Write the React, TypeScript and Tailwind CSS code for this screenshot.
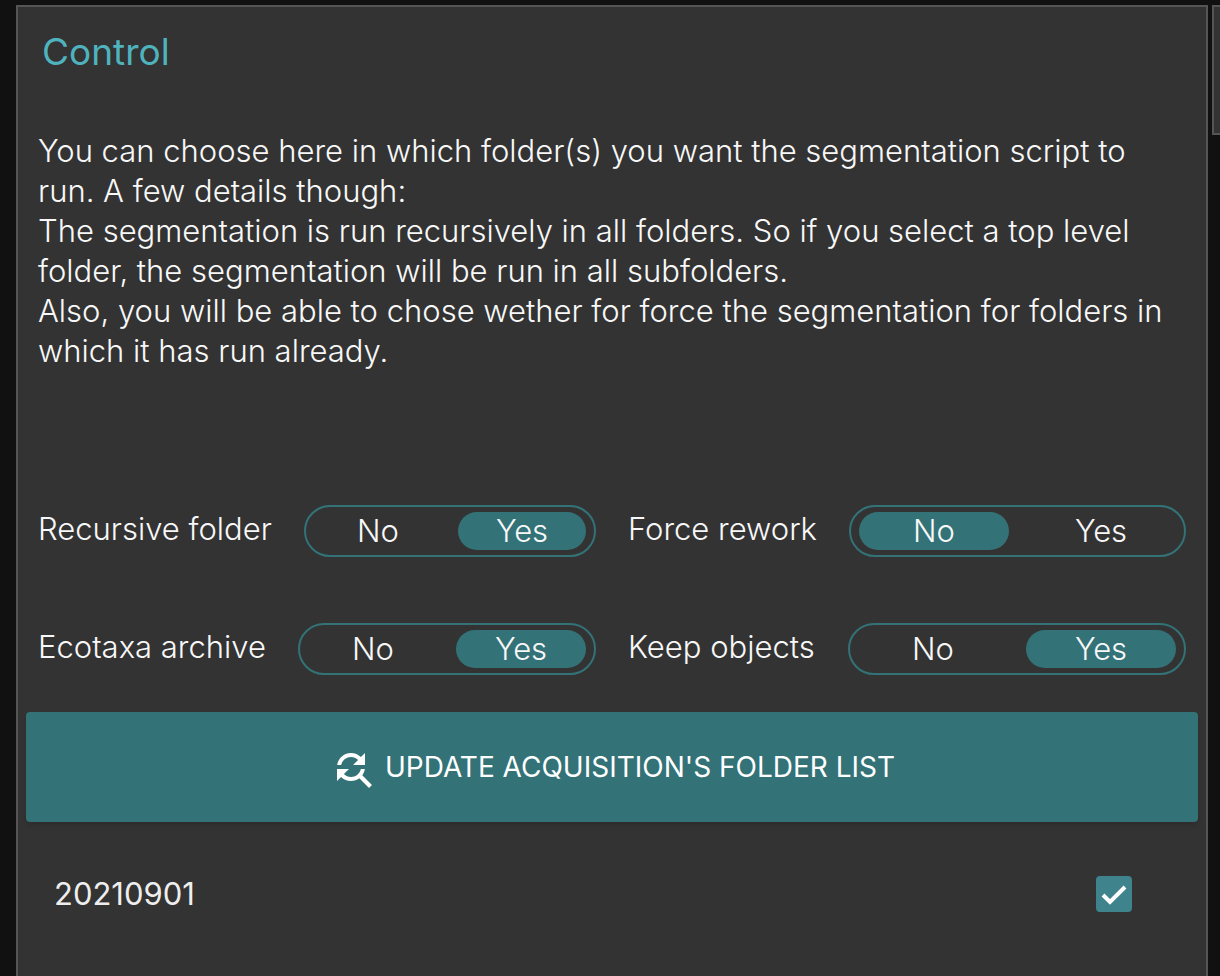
import React, { useId, useState } from "react";

type ToggleProps = { label: string; initial: "No" | "Yes"; className: string; pill: string };

function Toggle({ label, initial, className, pill }: ToggleProps) {
  const [value, setValue] = useState(initial);
  const id = useId();
  return (
    <div role="group" aria-labelledby={id} className="flex items-center justify-between">
      <span id={id} className="pb-1 whitespace-nowrap">{label}</span>
      <div className={`flex h-[52px] items-center justify-between rounded-full border-2 border-[#337277] px-2 ${className}`}>
        {(["No", "Yes"] as const).map((option) => (
          <button
            key={option}
            type="button"
            aria-pressed={value === option}
            onClick={() => setValue(option)}
            className={`flex h-[38px] items-center justify-center rounded-full ${pill} ${value === option ? "bg-[#337277]" : ""}`}
          >
            {option}
          </button>
        ))}
      </div>
    </div>
  );
}

export default function App() {
  const [checked, setChecked] = useState(true);
  return (
    <div className="flex min-h-screen items-stretch bg-[#111111] pt-[5px] pl-4 font-['Inter',sans-serif] text-[31px] leading-10 font-light text-[#f8f8f8]">
      <main className="min-w-0 flex-1 border-2 border-b-0 border-[#555555] bg-[#333333] px-2">
        <h1 className="px-4 pt-[23px] text-[37px] leading-11 font-normal text-[#4fb3bf]">Control</h1>
        <div className="px-3 pt-[57px]">
          <p>
            You can choose here in which folder(s) you want the segmentation script to run. A few details though:
            <br />
            The segmentation is run recursively in all folders. So if you select a top level folder, the segmentation will be run in all subfolders.
            <br />
            Also, you will be able to chose wether for force the segmentation for folders in which it has run already.
          </p>
        </div>
        <div className="grid grid-cols-2 gap-x-8 gap-y-[66px] pt-[134px] pr-3 pl-3">
          <Toggle label="Recursive folder" initial="Yes" className="w-[292px]" pill="w-32" />
          <Toggle label="Force rework" initial="No" className="w-[337px]" pill="w-[150px]" />
          <Toggle label="Ecotaxa archive" initial="Yes" className="w-[298px]" pill="w-[130px]" />
          <Toggle label="Keep objects" initial="Yes" className="w-[338px]" pill="w-[150px]" />
        </div>
        <button type="button" className="mt-[37px] flex h-[110px] w-full items-center justify-center gap-2 rounded bg-[#337277] text-[28px] font-normal text-white shadow-md">
          <svg viewBox="0 0 24 24" className="mt-1 size-12" fill="currentColor" aria-hidden="true">
            <path d="M11 6c1.38 0 2.63.56 3.54 1.46L12 10h6V4l-2.05 2.05C14.68 4.78 12.93 4 11 4c-3.53 0-6.43 2.61-6.92 6H6.1c.46-2.28 2.48-4 4.9-4zm5.64 9.14c.66-.9 1.12-1.97 1.28-3.14H15.9c-.46 2.28-2.48 4-4.9 4-1.38 0-2.63-.56-3.54-1.46L10 12H4v6l2.05-2.05C7.32 17.22 9.07 18 11 18c1.55 0 2.98-.51 4.14-1.36L20 21.49 21.49 20l-4.85-4.86z" />
          </svg>
          UPDATE ACQUISITION'S FOLDER LIST
        </button>
        <label className="mt-[52px] flex items-center justify-between pr-[66px] pl-7 font-normal text-[#eeeeee]">
          <span>20210901</span>
          <span className="relative flex size-9">
            <input type="checkbox" checked={checked} onChange={(e) => setChecked(e.target.checked)} className="peer size-9 appearance-none rounded border-4 border-[#3f838d] checked:bg-[#3f838d]" />
            <svg viewBox="0 0 36 36" className="pointer-events-none absolute inset-0 hidden size-9 peer-checked:block" fill="none" stroke="white" strokeWidth="4" aria-hidden="true">
              <path d="m7 19 7 7L29 11" />
            </svg>
          </span>
        </label>
      </main>
      <aside className="ml-1 h-[130px] w-2 border-2 border-r-0 border-[#555555] bg-[#333333]" />
    </div>
  );
}
